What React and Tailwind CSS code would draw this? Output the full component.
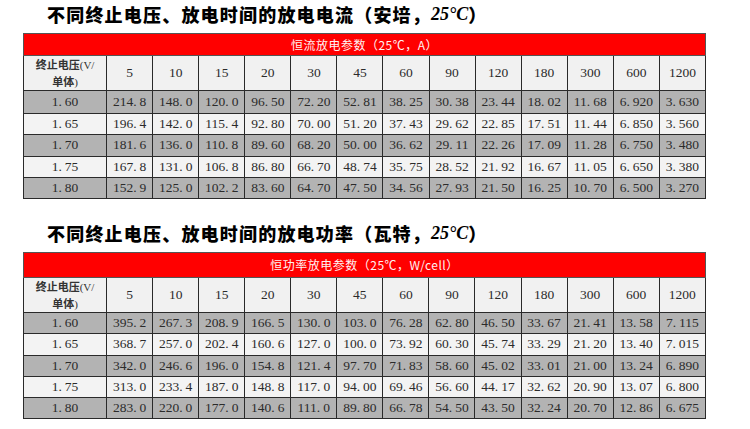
import React from "react";

const COLS = ["5", "10", "15", "20", "30", "45", "60", "90", "120", "180", "300", "600", "1200"];

const T1 = [
  ["1.60", "214.8", "148.0", "120.0", "96.50", "72.20", "52.81", "38.25", "30.38", "23.44", "18.02", "11.68", "6.920", "3.630"],
  ["1.65", "196.4", "142.0", "115.4", "92.80", "70.00", "51.20", "37.43", "29.62", "22.85", "17.51", "11.44", "6.850", "3.560"],
  ["1.70", "181.6", "136.0", "110.8", "89.60", "68.20", "50.00", "36.62", "29.11", "22.26", "17.09", "11.28", "6.750", "3.480"],
  ["1.75", "167.8", "131.0", "106.8", "86.80", "66.70", "48.74", "35.75", "28.52", "21.92", "16.67", "11.05", "6.650", "3.380"],
  ["1.80", "152.9", "125.0", "102.2", "83.60", "64.70", "47.50", "34.56", "27.93", "21.50", "16.25", "10.70", "6.500", "3.270"],
];

const T2 = [
  ["1.60", "395.2", "267.3", "208.9", "166.5", "130.0", "103.0", "76.28", "62.80", "46.50", "33.67", "21.41", "13.58", "7.115"],
  ["1.65", "368.7", "257.0", "202.4", "160.6", "127.0", "100.0", "73.92", "60.30", "45.74", "33.29", "21.20", "13.40", "7.015"],
  ["1.70", "342.0", "246.6", "196.0", "154.8", "121.4", "97.70", "71.83", "58.60", "45.02", "33.01", "21.00", "13.24", "6.890"],
  ["1.75", "313.0", "233.4", "187.0", "148.8", "117.0", "94.00", "69.46", "56.60", "44.17", "32.62", "20.90", "13.07", "6.800"],
  ["1.80", "283.0", "220.0", "177.0", "140.6", "111.0", "89.80", "66.78", "54.50", "43.50", "32.24", "20.70", "12.86", "6.675"],
];

const SERIF = "font-['Liberation_Serif',serif]";
const CJK = "font-['Noto_Sans_CJK_SC',sans-serif]";

function Num({ v }) {
  const i = v.indexOf(".");
  if (i < 0) return <>{v}</>;
  return (
    <>
      {v.slice(0, i)}
      <span className="mr-[3px]">.</span>
      {v.slice(i + 1)}
    </>
  );
}

function Title({ text, unit }) {
  return (
    <div className={`h-[28px] pl-[47px] flex items-center text-black text-[18px] font-black tracking-[1.2px] leading-none ${CJK}`}>
      <span>
        {text}（{unit}，
      </span>
      <span className={`italic font-bold tracking-normal ${SERIF}`}>25°C</span>
      <span>）</span>
    </div>
  );
}

function Table({ caption, rows, redH, headH, rowHs }) {
  const cell = "border border-[#2a2a2a] text-center align-middle p-0";
  return (
    <table className={`ml-[23px] w-[683px] border-collapse table-fixed border border-[#555] text-[#2b2b2b] text-[13.5px] ${SERIF}`}>
      <colgroup>
        <col className="w-[83px]" />
        {COLS.map((c) => (
          <col key={c} className="w-[46px]" />
        ))}
      </colgroup>
      <tbody>
        <tr className={redH}>
          <td
            colSpan={14}
            className={`bg-[#ff0000] text-[#fff2f2] text-[12px] text-center border border-[#555] tracking-[0.5px] ${CJK}`}
          >
            {caption}
          </td>
        </tr>
        <tr className={`${headH} bg-[#f1f1f1]`}>
          <td className={cell}>
            <div className={`text-[11px] leading-[16px] font-bold text-[#333] ${CJK}`}>
              <div>
                终止电压<span className={`font-normal ${SERIF}`}>(V/</span>
              </div>
              <div>
                单体<span className={`font-normal ${SERIF}`}>)</span>
              </div>
            </div>
          </td>
          {COLS.map((c) => (
            <td key={c} className={cell}>
              {c}
            </td>
          ))}
        </tr>
        {rows.map((r, ri) => (
          <tr key={ri} className={`${rowHs[ri]} ${ri % 2 === 0 ? "bg-[#b3b3b3]" : "bg-[#f3f3f3]"}`}>
            {r.map((v, ci) => (
              <td key={ci} className={cell}>
                <Num v={v} />
              </td>
            ))}
          </tr>
        ))}
      </tbody>
    </table>
  );
}

export default function App() {
  return (
    <div className="w-[750px] h-[429px] bg-white overflow-hidden flex flex-col">
      <Title text="不同终止电压、放电时间的放电电流" unit="安培" />
      <div className="mt-[5px]">
        <Table
          caption="恒流放电参数（25℃，A）"
          rows={T1}
          redH="h-[22px]"
          headH="h-[32px]"
          rowHs={["h-[23px]", "h-[21px]", "h-[21px]", "h-[21px]", "h-[21px]"]}
        />
      </div>
      <div className="mt-[20px]">
        <Title text="不同终止电压、放电时间的放电功率" unit="瓦特" />
      </div>
      <div className="mt-[5px]">
        <Table
          caption="恒功率放电参数（25℃，W/cell）"
          rows={T2}
          redH="h-[25px]"
          headH="h-[33px]"
          rowHs={["h-[21px]", "h-[21px]", "h-[21px]", "h-[21px]", "h-[21px]"]}
        />
      </div>
    </div>
  );
}
